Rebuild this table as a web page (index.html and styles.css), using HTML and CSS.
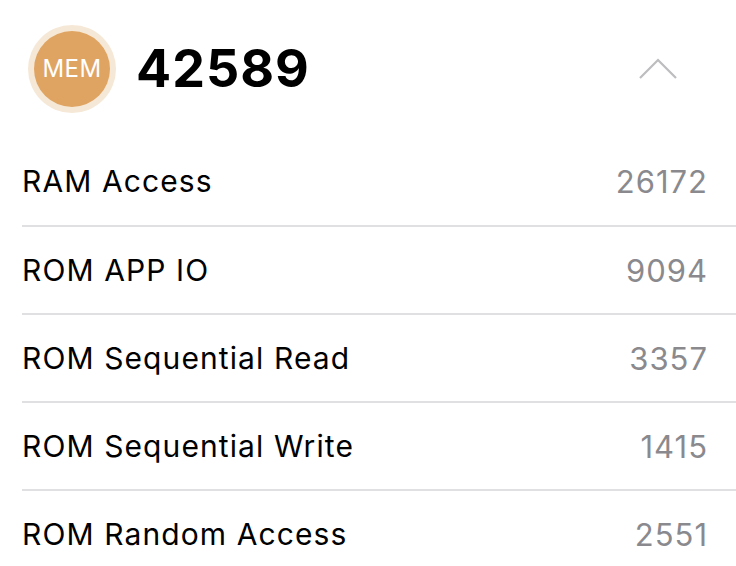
FILE: index.html
```html
<!DOCTYPE html>
<html>
<head>
<meta charset="utf-8">
<link rel="stylesheet" href="styles.css">
</head>
<body>
<div class="card">
  <div class="header">
    <div class="badge"><span class="badge-inner">MEM</span></div>
    <div class="score">42589</div>
    <svg class="chevron" width="40" height="24" viewBox="0 0 40 24"><path d="M1 21 L19 3 L37 21" fill="none" stroke="#bdbdc0" stroke-width="2.2"/></svg>
  </div>
  <div class="list">
    <div class="row"><span class="label">RAM Access</span><span class="value">26172</span></div>
    <div class="row"><span class="label">ROM APP IO</span><span class="value">9094</span></div>
    <div class="row"><span class="label">ROM Sequential Read</span><span class="value">3357</span></div>
    <div class="row"><span class="label">ROM Sequential Write</span><span class="value">1415</span></div>
    <div class="row"><span class="label">ROM Random Access</span><span class="value">2551</span></div>
  </div>
</div>
</body>
</html>
```
FILE: styles.css
```css
html, body {
  margin: 0;
  padding: 0;
  background: #ffffff;
}
body {
  font-family: "Inter", "Liberation Sans", sans-serif;
  overflow: hidden;
}
.header {
  display: flex;
  align-items: center;
  height: 137px;
  padding-left: 28px;
  padding-right: 57px;
  box-sizing: border-box;
}
.badge {
  width: 88px;
  height: 88px;
  border-radius: 50%;
  background: #f6e8d6;
  display: flex;
  align-items: center;
  justify-content: center;
  flex-shrink: 0;
}
.badge-inner {
  width: 76px;
  height: 76px;
  border-radius: 50%;
  background: #dfa462;
  color: #ffffff;
  font-size: 24px;
  display: flex;
  align-items: center;
  justify-content: center;
  letter-spacing: 0.4px;
}
.score {
  font-size: 52px;
  font-weight: 700;
  color: #000;
  margin-left: 20px;
  letter-spacing: 1px;
  flex: 1;
}
.chevron {
  display: block;
}
.list {
  margin-left: 22px;
}
.row {
  height: 88px;
  box-sizing: border-box;
  display: flex;
  align-items: center;
  justify-content: space-between;
  padding-right: 28px;
}
.row + .row {
  border-top: 2px solid #e0e0e2;
}
.label {
  font-size: 30px;
  color: #000;
  letter-spacing: 1.1px;
}
.value {
  font-size: 31px;
  color: #8a8a8e;
  letter-spacing: 1px;
}
```
